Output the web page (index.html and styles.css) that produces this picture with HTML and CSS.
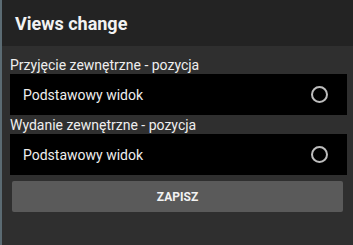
FILE: index.html
```html
<!DOCTYPE html>
<html lang="pl">
<head>
<meta charset="UTF-8">
<meta name="viewport" content="width=device-width, initial-scale=1.0">
<title>Views change</title>
<link rel="stylesheet" href="styles.css">
</head>
<body>
<div class="screen">
    <div class="toolbar">
        <h1>Views change</h1>
    </div>
    <div class="content">
        <p class="label">Przyjęcie zewnętrzne - pozycja</p>
        <div class="row">
            <span>Podstawowy widok</span>
            <span class="radio"></span>
        </div>
        <p class="label">Wydanie zewnętrzne - pozycja</p>
        <div class="row">
            <span>Podstawowy widok</span>
            <span class="radio"></span>
        </div>
        <button class="button">ZAPISZ</button>
    </div>
</div>
</body>
</html>
```

FILE: styles.css
```css
  body {
      font-family: Roboto, "Noto Sans", sans-serif;
      background-color: #2f2f2f;
      margin: 0;
      padding: 0;
  }
  .screen {
      height: 245px;
      border-left: 2px solid #5b6b73;
      background: #2f2f2f;
      color: #eeeeee;
  }
  .toolbar {
      height: 46px;
      background: #232323;
      display: flex;
      align-items: center;
      padding-left: 13px;
  }
  h1 {
      margin: 0;
      font-size: 18px;
      font-weight: bold;
      color: #f2f2f2;
  }
  .content {
      padding: 11px 6px 0 8px;
  }
  .label {
      margin: 0;
      font-size: 14px;
      line-height: 17px;
  }
  .row {
      height: 41px;
      background: #000;
      display: flex;
      align-items: center;
      justify-content: space-between;
      padding: 0 19px 0 13px;
      font-size: 14px;
      margin-bottom: 2px;
  }
  .radio {
      width: 13px;
      height: 13px;
      border: 2px solid #bdbdbd;
      border-radius: 50%;
  }
  .button {
      display: block;
      width: 331px;
      height: 31px;
      margin: 6px 0 0 2px;
      background-color: #5a5a5a;
      color: #f2f2f2;
      border: none;
      border-radius: 2px;
      font-family: Roboto, sans-serif;
      font-size: 12px;
      font-weight: bold;
  }
```
